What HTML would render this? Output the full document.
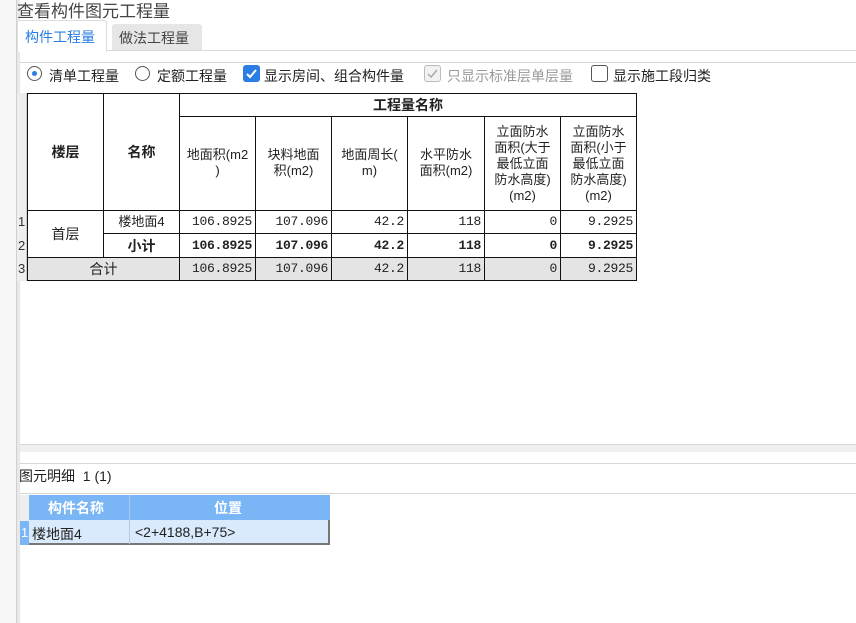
<!DOCTYPE html>
<html><head><meta charset="utf-8"><style>
*{margin:0;padding:0;box-sizing:border-box}
body{width:856px;height:623px;background:#fff;position:relative;overflow:hidden;font-family:"Liberation Sans","Noto Sans CJK SC",sans-serif;color:#222}
.a{position:absolute}
.t{font-size:14px;white-space:nowrap}
table{border-collapse:collapse;position:absolute;left:27px;top:93px;table-layout:fixed;font-family:"Liberation Sans","Noto Sans CJK SC",sans-serif;font-size:13px}
td{border:1px solid #111;text-align:center;padding:0 2px;line-height:16px;overflow:hidden}
.n{text-align:right;font-family:"Liberation Mono","Noto Sans CJK SC",monospace;font-size:13px;padding-right:3px;letter-spacing:-0.3px}
.b{font-weight:bold}
.g{background:#e4e4e4}
</style></head><body>
<div class="a" style="left:0;top:0;width:17px;height:623px;background:#f7f7f7;border-right:1px solid #d0d0d0"></div>
<div class="a" style="left:17px;top:0;width:3px;height:623px;background:#e8e8e8"></div>
<div class="a t" style="left:17px;top:-3px;font-size:17px;color:#444">查看构件图元工程量</div>
<div class="a" style="left:17px;top:20px;width:90px;height:32px;background:#fff;border:1px solid #ddd;border-bottom:none;border-radius:3px 3px 0 0"></div>
<div class="a t" style="left:25px;top:27px;color:#2a7de1;font-size:14px">构件工程量</div>
<div class="a" style="left:112px;top:24px;width:90px;height:26px;background:#e6e6e6;border-radius:3px 3px 0 0"></div>
<div class="a t" style="left:119px;top:28px;color:#444">做法工程量</div>
<div class="a" style="left:107px;top:50px;width:749px;height:1px;background:#d8d8d8"></div>
<div class="a" style="left:20px;top:62px;width:836px;height:1px;background:#d8d8d8"></div>
<div class="a" style="left:27px;top:66px;width:15px;height:15px;border:1px solid #555;border-radius:50%"></div>
<div class="a" style="left:32px;top:71px;width:5px;height:5px;background:#2a7de1;border-radius:50%"></div>
<div class="a t" style="left:49px;top:66px">清单工程量</div>
<div class="a" style="left:135px;top:66px;width:15px;height:15px;border:1px solid #555;border-radius:50%"></div>
<div class="a t" style="left:157px;top:66px">定额工程量</div>
<div class="a" style="left:243px;top:65px;width:17px;height:17px;background:#2a7de1;border-radius:3px"></div>
<svg class="a" style="left:243px;top:65px" width="17" height="17"><path d="M4 9l3 3 6-7" stroke="#fff" stroke-width="2" fill="none"/></svg>
<div class="a t" style="left:264px;top:66px">显示房间、组合构件量</div>
<div class="a" style="left:424px;top:65px;width:17px;height:17px;border:1px solid #bbb;border-radius:3px;background:#f2f2f2"></div>
<svg class="a" style="left:424px;top:65px" width="17" height="17"><path d="M4 9l3 3 6-7" stroke="#aaa" stroke-width="1.5" fill="none"/></svg>
<div class="a t" style="left:447px;top:66px;color:#999">只显示标准层单层量</div>
<div class="a" style="left:591px;top:65px;width:17px;height:17px;border:1px solid #555;border-radius:3px"></div>
<div class="a t" style="left:613px;top:66px">显示施工段归类</div>
<div class="a" style="left:17px;top:93px;width:10px;height:188px;background:#eee;border-right:1px solid #ccc"></div>
<div class="a" style="left:18px;top:214px;font-size:13px;color:#333">1</div>
<div class="a" style="left:18px;top:238px;font-size:13px;color:#333">2</div>
<div class="a" style="left:18px;top:261px;font-size:13px;color:#333">3</div>
<table>
<colgroup><col style="width:76px"><col style="width:76px"><col style="width:76px"><col style="width:76px"><col style="width:76px"><col style="width:77px"><col style="width:76px"><col style="width:76px"></colgroup>
<tr style="height:23px"><td rowspan="2" class="b" style="font-size:14px">楼层</td><td rowspan="2" class="b" style="font-size:14px">名称</td><td colspan="6" class="b" style="font-size:14px">工程量名称</td></tr>
<tr style="height:94px"><td style="vertical-align:top;padding-top:30px">地面积(m2<br>)</td><td style="vertical-align:top;padding-top:30px">块料地面<br>积(m2)</td><td style="vertical-align:top;padding-top:30px">地面周长(<br>m)</td><td style="vertical-align:top;padding-top:30px">水平防水<br>面积(m2)</td><td>立面防水<br>面积(大于<br>最低立面<br>防水高度)<br>(m2)</td><td>立面防水<br>面积(小于<br>最低立面<br>防水高度)<br>(m2)</td></tr>
<tr style="height:23px"><td rowspan="2" style="font-size:14px">首层</td><td>楼地面4</td><td class="n">106.8925</td><td class="n">107.096</td><td class="n">42.2</td><td class="n">118</td><td class="n">0</td><td class="n">9.2925</td></tr>
<tr style="height:24px"><td class="b" style="font-size:14px">小计</td><td class="n b">106.8925</td><td class="n b">107.096</td><td class="n b">42.2</td><td class="n b">118</td><td class="n b">0</td><td class="n b">9.2925</td></tr>
<tr style="height:23px" class="g"><td colspan="2" style="font-size:14px">合计</td><td class="n">106.8925</td><td class="n">107.096</td><td class="n">42.2</td><td class="n">118</td><td class="n">0</td><td class="n">9.2925</td></tr>
</table>
<div class="a" style="left:20px;top:444px;width:836px;height:1px;background:#d6d6d6"></div>
<div class="a" style="left:20px;top:445px;width:836px;height:7px;background:#efefef"></div>
<div class="a" style="left:20px;top:463px;width:836px;height:1px;background:#d6d6d6"></div>
<div class="a t" style="left:19px;top:466px;font-size:14px">图元明细&nbsp; 1 (1)</div>
<div class="a" style="left:20px;top:493px;width:836px;height:1px;background:#d6d6d6"></div>
<div class="a" style="left:20px;top:495px;width:9px;height:50px;background:#eee"></div>
<div class="a" style="left:20px;top:521px;width:9px;height:24px;background:#7ab6f5"></div>
<div class="a" style="left:21px;top:525px;font-size:13px;color:#fff">1</div>
<div class="a" style="left:29px;top:495px;width:301px;height:25px;background:#7ab6f5"></div>
<div class="a" style="left:129px;top:495px;width:1px;height:50px;background:#a8c8ea"></div>
<div class="a t" style="left:48px;top:498px;color:#fff;font-weight:bold">构件名称</div>
<div class="a t" style="left:214px;top:498px;color:#fff;font-weight:bold">位置</div>
<div class="a" style="left:29px;top:520px;width:301px;height:25px;background:#d9eafc;border-right:2px solid #777;border-bottom:2px solid #777"></div>
<div class="a" style="left:129px;top:520px;width:1px;height:24px;background:#b8c8da"></div>
<div class="a t" style="left:32px;top:524px">楼地面4</div>
<div class="a t" style="left:135px;top:524px">&lt;2+4188,B+75&gt;</div>
</body></html>
